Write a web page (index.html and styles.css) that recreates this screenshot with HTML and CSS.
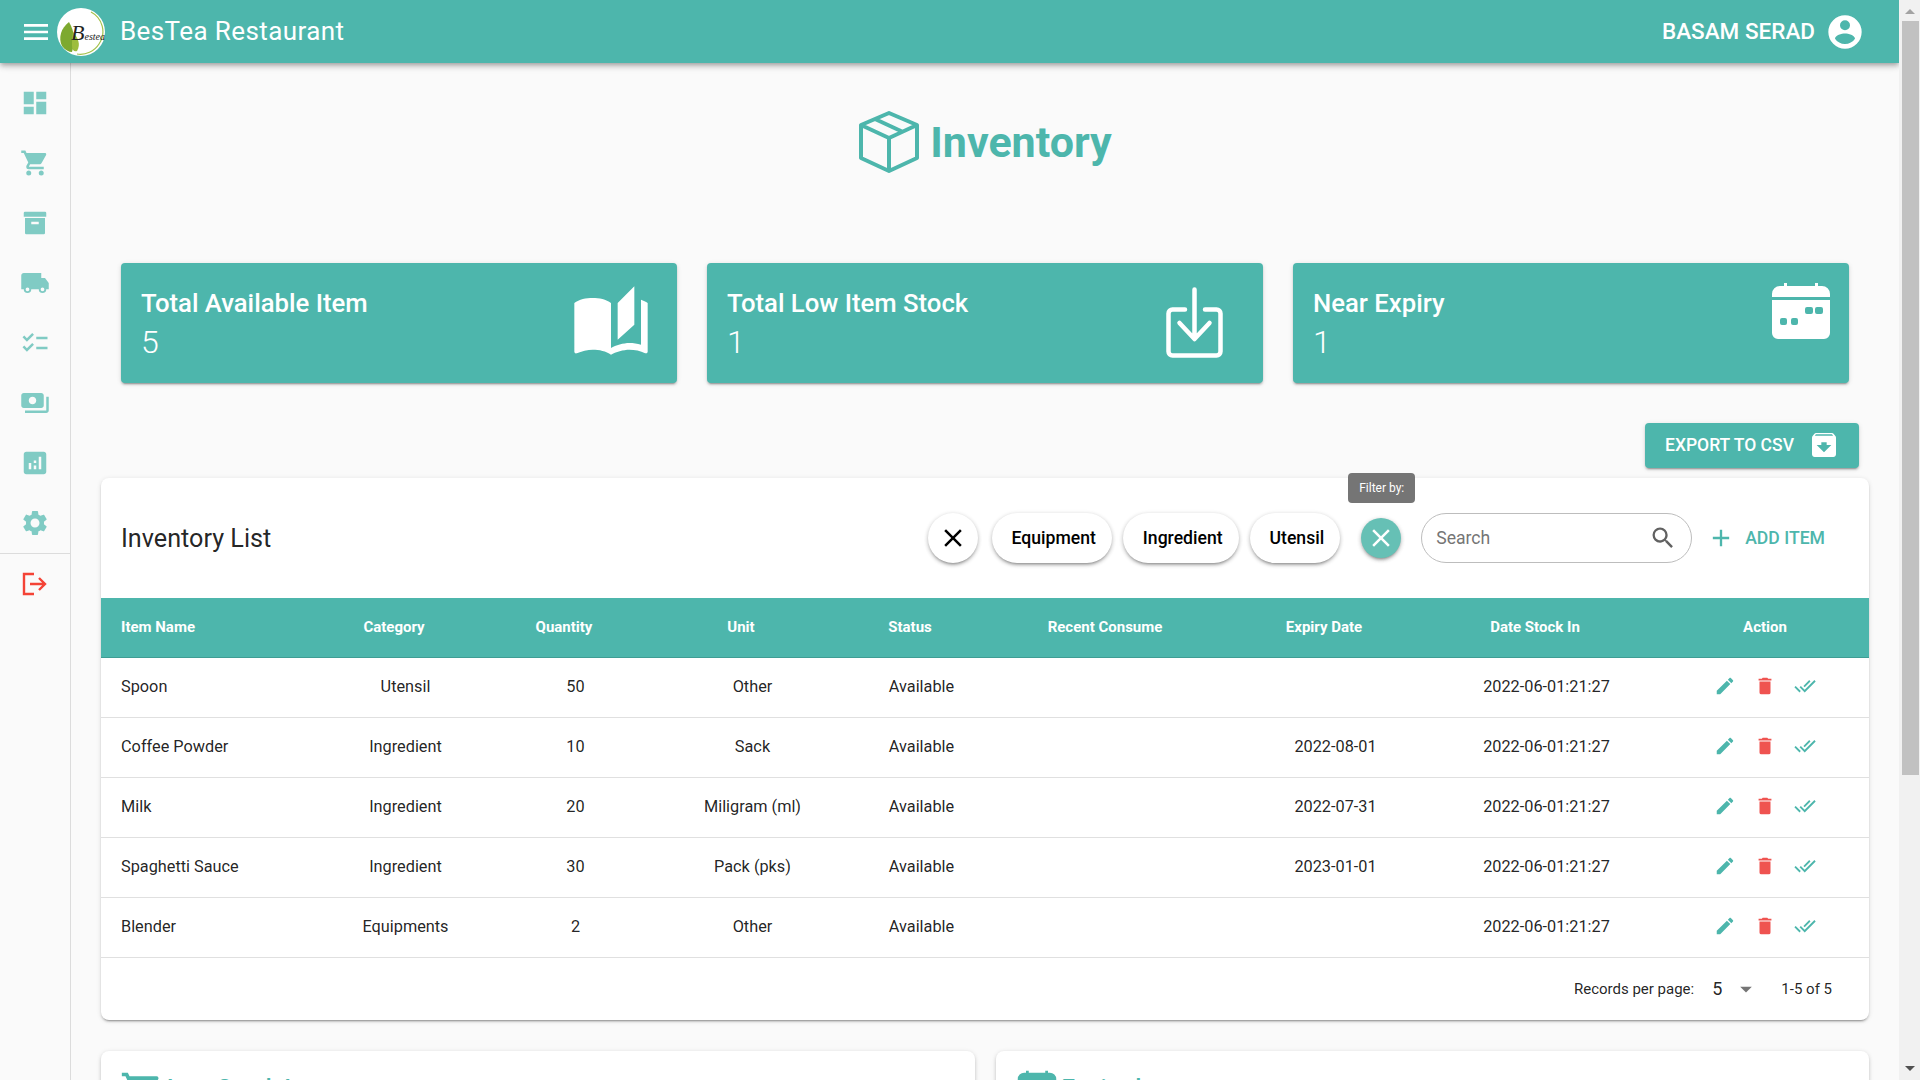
FILE: index.html
```html
<!DOCTYPE html>
<html lang="en">
<head>
  <meta charset="UTF-8">
  <meta name="viewport" content="width=device-width, initial-scale=1.0">
  <title>BesTea Restaurant - Inventory</title>
  <link rel="stylesheet" href="styles.css">
</head>
<body>
  <div class="window">
    <div class="app">
      <header class="topbar">
        <div class="brand">
          <svg class="menu-icon" viewBox="0 0 24 24"><path d="M3,6H21V8H3V6M3,11H21V13H3V11M3,16H21V18H3V16Z"/></svg>
          <svg class="logo" viewBox="0 0 48 48">
            <circle cx="24" cy="24" r="24" fill="#fff"/>
            <path d="M34 4a22 22 0 0 1 8 32 22 22 0 0 1-22 10" fill="none" stroke="#a4c14a" stroke-width="1.2"/>
            <path d="M12 14C4 20 1 30 5 38C8 42 12 44 15 44C18 34 18 24 12 14z" fill="#7da92f"/>
            <path d="M16 24C21 30 24 36 20 43C17 44 15 42 15 38C15 33 15 28 16 24z" fill="#9dbd3d"/>
            <text class="logo-text" x="14" y="32"><tspan class="logo-cap">B</tspan>estea</text>
          </svg>
          <span class="brand-name">BesTea Restaurant</span>
        </div>
        <div class="user">
          <span class="user-name">BASAM SERAD</span>
          <svg class="user-icon" viewBox="0 0 24 24"><path d="M12,19.2C9.5,19.2 7.29,17.92 6,16C6.03,14 10,12.9 12,12.9C14,12.9 17.97,14 18,16C16.71,17.92 14.5,19.2 12,19.2M12,5A3,3 0 0,1 15,8A3,3 0 0,1 12,11A3,3 0 0,1 9,8A3,3 0 0,1 12,5M12,2A10,10 0 0,0 2,12A10,10 0 0,0 12,22A10,10 0 0,0 22,12A10,10 0 0,0 12,2Z"/></svg>
        </div>
      </header>

      <div class="body-row">
        <nav class="sidebar">
          <div class="nav-item"><svg viewBox="0 0 24 24"><path d="M13,3V9H21V3M13,21H21V11H13M3,21H11V15H3M3,13H11V3H3V13Z"/></svg></div>
          <div class="nav-item"><svg viewBox="0 0 24 24"><path d="M17,18C15.89,18 15,18.89 15,20A2,2 0 0,0 17,22A2,2 0 0,0 19,20C19,18.89 18.1,18 17,18M1,2V4H3L6.6,11.59L5.24,14.04C5.09,14.32 5,14.65 5,15A2,2 0 0,0 7,17H19V15H7.42A0.25,0.25 0 0,1 7.17,14.75C7.17,14.7 7.18,14.66 7.2,14.63L8.1,13H15.55C16.3,13 16.96,12.58 17.3,11.97L20.88,5.5C20.95,5.34 21,5.17 21,5A1,1 0 0,0 20,4H5.21L4.27,2M7,18C5.89,18 5,18.89 5,20A2,2 0 0,0 7,22A2,2 0 0,0 9,20C9,18.89 8.1,18 7,18Z"/></svg></div>
          <div class="nav-item"><svg viewBox="0 0 24 24"><path d="M4,3H20A1,1 0 0,1 21,4V7H3V4A1,1 0 0,1 4,3M4,8H20V20A1,1 0 0,1 19,21H5A1,1 0 0,1 4,20V8M9,11V13H15V11H9Z"/></svg></div>
          <div class="nav-item"><svg viewBox="0 0 24 24"><path d="M20,8H17V4H3C1.89,4 1,4.89 1,6V17H3A3,3 0 0,0 6,20A3,3 0 0,0 9,17H15A3,3 0 0,0 18,20A3,3 0 0,0 21,17H23V12L20,8M6,18.5A1.5,1.5 0 0,1 4.5,17A1.5,1.5 0 0,1 6,15.5A1.5,1.5 0 0,1 7.5,17A1.5,1.5 0 0,1 6,18.5M18,18.5A1.5,1.5 0 0,1 16.5,17A1.5,1.5 0 0,1 18,15.5A1.5,1.5 0 0,1 19.5,17A1.5,1.5 0 0,1 18,18.5Z"/></svg></div>
          <div class="nav-item"><svg viewBox="0 0 24 24"><path d="M22,7h-9v2h9V7z M22,15h-9v2h9V15z M5.54,11L2,7.46l1.41-1.41l2.12,2.12l4.24-4.24l1.41,1.41L5.54,11z M5.54,19L2,15.46l1.41-1.41l2.12,2.12l4.24-4.24l1.41,1.41L5.54,19z"/></svg></div>
          <div class="nav-item"><svg viewBox="0 0 24 24"><path d="M19,14V6c0-1.1-0.9-2-2-2H3C1.9,4,1,4.9,1,6v8c0,1.1,0.9,2,2,2h14C18.1,16,19,15.1,19,14z M10,13c-1.66,0-3-1.34-3-3s1.34-3,3-3s3,1.34,3,3S11.66,13,10,13z M23,7v11c0,1.1-0.9,2-2,2H4v-2h17V7H23z"/></svg></div>
          <div class="nav-item"><svg viewBox="0 0 24 24"><path d="M19,3H5C3.9,3,3,3.9,3,5v14c0,1.1,0.9,2,2,2h14c1.1,0,2-0.9,2-2V5C21,3.9,20.1,3,19,3z M9,17H7v-5h2V17z M13,17h-2v-3h2V17z M13,12h-2v-2h2V12z M17,17h-2V7h2V17z"/></svg></div>
          <div class="nav-item"><svg viewBox="0 0 24 24"><path d="M19.14,12.94c0.04-0.3,0.06-0.61,0.06-0.94c0-0.32-0.02-0.64-0.07-0.94l2.03-1.58c0.18-0.14,0.23-0.41,0.12-0.61 l-1.92-3.32c-0.12-0.22-0.37-0.29-0.59-0.22l-2.39,0.96c-0.5-0.38-1.03-0.7-1.62-0.94L14.4,2.81c-0.04-0.24-0.24-0.41-0.48-0.41 h-3.84c-0.24,0-0.43,0.17-0.47,0.41L9.25,5.35C8.66,5.59,8.12,5.92,7.63,6.29L5.24,5.33c-0.22-0.08-0.47,0-0.59,0.22L2.74,8.87 C2.62,9.08,2.66,9.34,2.86,9.48l2.03,1.58C4.84,11.36,4.8,11.69,4.8,12s0.02,0.64,0.07,0.94l-2.03,1.58 c-0.18,0.14-0.23,0.41-0.12,0.61l1.92,3.32c0.12,0.22,0.37,0.29,0.59,0.22l2.39-0.96c0.5,0.38,1.03,0.7,1.62,0.94l0.36,2.54 c0.05,0.24,0.24,0.41,0.48,0.41h3.84c0.24,0,0.44-0.17,0.47-0.41l0.36-2.54c0.59-0.24,1.13-0.56,1.62-0.94l2.39,0.96 c0.22,0.08,0.47,0,0.59-0.22l1.92-3.32c0.12-0.22,0.07-0.47-0.12-0.61L19.14,12.94z M12,15.6c-1.98,0-3.6-1.62-3.6-3.6 s1.62-3.6,3.6-3.6s3.6,1.62,3.6,3.6S13.98,15.6,12,15.6z"/></svg></div>
          <div class="nav-item nav-logout">
            <svg viewBox="0 0 26 24"><path d="M12 2H2v20h10M8 12h15M17 6l6 6-6 6"/></svg>
          </div>
        </nav>

        <main class="content">
          <h1 class="page-title">
            <svg class="cube" viewBox="0 0 62 62"><path d="M31 2L59 14V47L31 60L3 47V14L31 2ZM3 14L31 27L59 14M31 27V60M17 8L45 21"/></svg>
            <span>Inventory</span>
          </h1>

          <section class="stats">
            <div class="stat-card">
              <div class="stat-text">
                <div class="stat-title">Total Available Item</div>
                <div class="stat-value">5</div>
              </div>
              <svg class="stat-icon" viewBox="0 0 24 24"><path d="M19 1L14 6V17L19 12.5V1M21 5V18.5C19.9 18.15 18.7 18 17.5 18C15.8 18 13.35 18.65 12 19.5V6C10.55 4.9 8.45 4.5 6.5 4.5C4.55 4.5 2.45 4.9 1 6V20.65C1 20.9 1.25 21.15 1.5 21.15C1.6 21.15 1.65 21.1 1.75 21.1C3.1 20.45 5.05 20 6.5 20C8.45 20 10.55 20.4 12 21.5C13.35 20.65 15.8 20 17.5 20C19.15 20 20.85 20.3 22.25 21.05C22.35 21.1 22.4 21.1 22.5 21.1C22.75 21.1 23 20.85 23 20.6V6C22.4 5.55 21.75 5.25 21 5Z"/></svg>
            </div>
            <div class="stat-card">
              <div class="stat-text">
                <div class="stat-title">Total Low Item Stock</div>
                <div class="stat-value">1</div>
              </div>
              <svg class="stat-icon stat-icon-line" viewBox="0 0 80 80"><path d="M28 26.5H15.5A4 4 0 0 0 11.5 30.5V68.5A4 4 0 0 0 15.5 72.5H59.5A4 4 0 0 0 63.5 68.5V30.5A4 4 0 0 0 59.5 26.5H48M37.5 6.5V55M22.5 40L37.5 56L52.5 40"/></svg>
            </div>
            <div class="stat-card">
              <div class="stat-text">
                <div class="stat-title">Near Expiry</div>
                <div class="stat-value">1</div>
              </div>
              <svg class="stat-icon stat-icon-cal" viewBox="0 0 80 80"><path d="M24 0H27V3H55V0H58V3H62A8 8 0 0 1 70 11V14H12V11A8 8 0 0 1 20 3H24ZM12 17H70V50A6 6 0 0 1 64 56H18A6 6 0 0 1 12 50ZM47 24A2 2 0 0 0 45 26V29A2 2 0 0 0 47 31H51A2 2 0 0 0 53 29V26A2 2 0 0 0 51 24ZM57 24A2 2 0 0 0 55 26V29A2 2 0 0 0 57 31H61A2 2 0 0 0 63 29V26A2 2 0 0 0 61 24ZM22 35A2 2 0 0 0 20 37V40A2 2 0 0 0 22 42H25A2 2 0 0 0 27 40V37A2 2 0 0 0 25 35ZM33 35A2 2 0 0 0 31 37V40A2 2 0 0 0 33 42H36A2 2 0 0 0 38 40V37A2 2 0 0 0 36 35Z" fill-rule="evenodd"/></svg>
            </div>
          </section>

          <div class="export-row">
            <button class="export-btn">
              <span>EXPORT TO CSV</span>
              <svg viewBox="0 0 24 24"><path d="M20.54 5.23L19.15 3.55C18.88 3.21 18.47 3 18 3H6C5.53 3 5.12 3.21 4.84 3.55L3.46 5.23C3.17 5.57 3 6 3 6.5V19C3 20.1 3.9 21 5 21H19C20.1 21 21 20.1 21 19V6.5C21 6 20.83 5.57 20.54 5.23M12 17.5L6.5 12H10V10H14V12H17.5L12 17.5M5.12 5L5.93 4H17.93L18.87 5H5.12Z"/></svg>
            </button>
          </div>

          <section class="list-card">
            <div class="list-head">
              <h2 class="list-title">Inventory List</h2>
              <div class="list-tools">
                <button class="chip chip-round"><svg viewBox="0 0 24 24"><path d="M19,6.41L17.59,5L12,10.59L6.41,5L5,6.41L10.59,12L5,17.59L6.41,19L12,13.41L17.59,19L19,17.59L13.41,12L19,6.41Z"/></svg></button>
                <button class="chip">Equipment</button>
                <button class="chip">Ingredient</button>
                <button class="chip">Utensil</button>
                <div class="filter-wrap">
                  <div class="tooltip">Filter by:</div>
                  <button class="filter-btn"><svg viewBox="0 0 24 24"><path d="M19,6.41L17.59,5L12,10.59L6.41,5L5,6.41L10.59,12L5,17.59L6.41,19L12,13.41L17.59,19L19,17.59L13.41,12L19,6.41Z"/></svg></button>
                </div>
                <div class="search">
                  <span>Search</span>
                  <svg viewBox="0 0 24 24"><path d="M9.5,3A6.5,6.5 0 0,1 16,9.5C16,11.11 15.41,12.59 14.44,13.73L14.71,14H15.5L20.5,19L19,20.5L14,15.5V14.71L13.73,14.44C12.59,15.41 11.11,16 9.5,16A6.5,6.5 0 0,1 3,9.5A6.5,6.5 0 0,1 9.5,3M9.5,5C7,5 5,7 5,9.5C5,12 7,14 9.5,14C12,14 14,12 14,9.5C14,7 12,5 9.5,5Z"/></svg>
                </div>
                <button class="add-btn">
                  <svg viewBox="0 0 24 24"><path d="M19,13H13V19H11V13H5V11H11V5H13V11H19V13Z"/></svg>
                  <span>ADD ITEM</span>
                </button>
              </div>
            </div>

            <table class="items">
              <thead>
                <tr>
                  <th>Item Name</th><th>Category</th><th>Quantity</th><th>Unit</th><th>Status</th><th>Recent Consume</th><th>Expiry Date</th><th>Date Stock In</th><th>Action</th>
                </tr>
              </thead>
              <tbody id="rows"></tbody>
            </table>

            <div class="table-foot">
              <span>Records per page:</span>
              <span class="per-page">5</span>
              <svg class="caret" viewBox="0 0 24 24"><path d="M7,10L12,15L17,10H7Z"/></svg>
              <span class="range">1-5 of 5</span>
            </div>
          </section>

          <section class="lower">
            <div class="lower-card">
              <svg viewBox="0 0 24 24"><path d="M17,18C15.89,18 15,18.89 15,20A2,2 0 0,0 17,22A2,2 0 0,0 19,20C19,18.89 18.1,18 17,18M1,2V4H3L6.6,11.59L5.24,14.04C5.09,14.32 5,14.65 5,15A2,2 0 0,0 7,17H19V15H7.42A0.25,0.25 0 0,1 7.17,14.75C7.17,14.7 7.18,14.66 7.2,14.63L8.1,13H15.55C16.3,13 16.96,12.58 17.3,11.97L20.88,5.5C20.95,5.34 21,5.17 21,5A1,1 0 0,0 20,4H5.21L4.27,2M7,18C5.89,18 5,18.89 5,20A2,2 0 0,0 7,22A2,2 0 0,0 9,20C9,18.89 8.1,18 7,18Z"/></svg>
              <span>Low Stock Items</span>
            </div>
            <div class="lower-card">
              <svg viewBox="0 0 24 24"><path d="M6 1H7.5V2H16.5V1H18V2H19A3.5 3.5 0 0 1 22.5 5.5V8H1.5V5.5A3.5 3.5 0 0 1 5 2H6V1ZM1.5 9H22.5V19A2 2 0 0 1 20.5 21H3.5A2 2 0 0 1 1.5 19V9Z"/></svg>
              <span>Expired</span>
            </div>
          </section>
        </main>
      </div>
    </div>

    <div class="scrollbar">
      <div class="arrow-up"></div>
      <div class="thumb"></div>
      <div class="arrow-down"></div>
    </div>
  </div>

  <script>
    // table rows
    const items = [
      ["Spoon", "Utensil", 50, "Other", "Available", "", "", "2022-06-01:21:27"],
      ["Coffee Powder", "Ingredient", 10, "Sack", "Available", "", "2022-08-01", "2022-06-01:21:27"],
      ["Milk", "Ingredient", 20, "Miligram (ml)", "Available", "", "2022-07-31", "2022-06-01:21:27"],
      ["Spaghetti Sauce", "Ingredient", 30, "Pack (pks)", "Available", "", "2023-01-01", "2022-06-01:21:27"],
      ["Blender", "Equipments", 2, "Other", "Available", "", "", "2022-06-01:21:27"]
    ];

    const actions = `
      <div class="actions">
        <svg class="act-edit" viewBox="0 0 24 24"><path d="M20.71,7.04C21.1,6.65 21.1,6 20.71,5.63L18.37,3.29C18,2.9 17.35,2.9 16.96,3.29L15.12,5.12L18.87,8.87M3,17.25V21H6.75L17.81,9.93L14.06,6.18L3,17.25Z"/></svg>
        <svg class="act-delete" viewBox="0 0 24 24"><path d="M19,4H15.5L14.5,3H9.5L8.5,4H5V6H19M6,19A2,2 0 0,0 8,21H16A2,2 0 0,0 18,19V7H6V19Z"/></svg>
        <svg class="act-check" viewBox="0 0 24 24"><path d="M0.41,13.41L6,19L7.41,17.58L1.83,12M22.24,5.58L11.66,16.17L7.5,12L6.07,13.41L11.66,19L23.66,7M18,7L16.59,5.58L10.24,11.93L11.66,13.34L18,7Z"/></svg>
      </div>`;

    document.getElementById("rows").innerHTML = items.map(row =>
      "<tr>" + row.map(v => "<td>" + v + "</td>").join("") + "<td>" + actions + "</td></tr>"
    ).join("");
  </script>
</body>
</html>
```

FILE: styles.css
```css
:root {
  --teal: #4db6ac;
  --teal-light: #80cbc4;
  --page-bg: #fafafa;
  --red: #f44336;
}
* {
  box-sizing: border-box;
}
html, body {
  margin: 0;
  height: 100%;
  overflow: hidden;
}
body {
  font-family: Roboto, "Liberation Sans", sans-serif;
  color: rgba(0,0,0,0.87);
  background: var(--page-bg);
}
button {
  font-family: inherit;
  border: none;
  cursor: pointer;
}
.window {
  display: flex;
  height: 1080px;
}
.app {
  width: 1899px;
  height: 1080px;
  overflow: hidden;
  display: flex;
  flex-direction: column;
}

/* scrollbar */
.scrollbar {
  width: 21px;
  background: #f1f1f1;
  display: flex;
  flex-direction: column;
  align-items: center;
  padding: 9px 0 9px 1px;
}
.thumb {
  width: 17px;
  height: 754px;
  margin-top: 7px;
  background: #c1c1c1;
}
.arrow-up, .arrow-down {
  width: 0;
  height: 0;
  border-left: 5px solid transparent;
  border-right: 5px solid transparent;
}
.arrow-up {
  border-bottom: 5px solid #a3a3a3;
}
.arrow-down {
  border-top: 5px solid #505050;
  margin-top: auto;
}

/* top bar */
.topbar {
  height: 63px;
  flex: none;
  background: var(--teal);
  color: #fff;
  display: flex;
  align-items: center;
  justify-content: space-between;
  padding: 0 34px 0 20px;
  box-shadow: 0 2px 4px -1px rgba(0,0,0,.2), 0 4px 5px 0 rgba(0,0,0,.14), 0 1px 10px 0 rgba(0,0,0,.12);
  position: relative;
  z-index: 2;
}
.brand {
  display: flex;
  align-items: center;
}
.menu-icon {
  width: 32px;
  height: 32px;
  fill: #fff;
}
.logo {
  width: 48px;
  height: 48px;
  margin-left: 5px;
}
.logo-text {
  font-family: "Liberation Serif", serif;
  font-style: italic;
  font-size: 10px;
  fill: #222;
}
.logo-cap {
  font-size: 22px;
}
.brand-name {
  font-size: 26px;
  letter-spacing: 0.4px;
  margin: 0 0 2px 15px;
}
.user {
  display: flex;
  align-items: center;
  gap: 10px;
  font-size: 22.5px;
  font-weight: 500;
}
.user-name {
  margin-bottom: 2px;
}
.user-icon {
  width: 40px;
  height: 40px;
  fill: #fff;
}

.body-row {
  flex: 1;
  display: flex;
  min-height: 0;
}

/* sidebar */
.sidebar {
  width: 71px;
  flex: none;
  border-right: 1px solid #dcdcdc;
  padding-top: 10px;
}
.nav-item {
  height: 60px;
  display: flex;
  align-items: center;
  justify-content: center;
}
.nav-item svg {
  width: 30px;
  height: 30px;
  fill: var(--teal-light);
}
.nav-logout {
  border-top: 1px solid #dcdcdc;
}
.nav-logout svg {
  width: 26px;
  height: 24px;
  fill: none;
  stroke: var(--red);
  stroke-width: 2.4;
}

/* main column */
.content {
  flex: 1;
  padding: 0 30px;
  min-width: 0;
}
.page-title {
  height: 127px;
  margin: 0;
  padding-top: 30px;
  display: flex;
  justify-content: center;
  align-items: center;
  gap: 10px;
  color: var(--teal);
  font-size: 43px;
  font-weight: 700;
}
.cube {
  width: 62px;
  height: 62px;
  fill: none;
  stroke: var(--teal);
  stroke-width: 4;
  stroke-linejoin: round;
}

.stats {
  display: grid;
  grid-template-columns: repeat(3, 1fr);
  gap: 30px;
  margin: 73px 20px 0;
}
.stat-card {
  height: 120px;
  background: var(--teal);
  color: #fff;
  border-radius: 4px;
  padding: 0 26px 0 20px;
  display: flex;
  justify-content: space-between;
  align-items: center;
  box-shadow: 0 3px 1px -2px rgba(0,0,0,.2), 0 2px 2px 0 rgba(0,0,0,.14), 0 1px 5px 0 rgba(0,0,0,.12);
}
.stat-text {
  padding-top: 2px;
}
.stat-title {
  font-size: 25.7px;
  font-weight: 500;
  line-height: 36px;
}
.stat-value {
  font-size: 32px;
  font-weight: 300;
  line-height: 42px;
}
.stat-icon {
  width: 80px;
  height: 80px;
  fill: #fff;
}
.stat-icon-line {
  fill: none;
  stroke: #fff;
  stroke-width: 4.5;
  stroke-linecap: round;
  stroke-linejoin: round;
}
.stat-icon-cal {
  margin-right: -17px;
}

.export-row {
  display: flex;
  justify-content: flex-end;
  margin-top: 40px;
  padding-right: 10px;
}
.export-btn {
  width: 214px;
  height: 45px;
  background: var(--teal);
  color: #fff;
  border-radius: 4px;
  font-size: 17.5px;
  font-weight: 500;
  display: flex;
  align-items: center;
  justify-content: space-between;
  padding: 0 19px 2px 20px;
  box-shadow: 0 3px 1px -2px rgba(0,0,0,.2), 0 2px 2px 0 rgba(0,0,0,.14), 0 1px 5px 0 rgba(0,0,0,.12);
}
.export-btn svg {
  width: 32px;
  height: 32px;
  fill: #fff;
}

/* inventory card */
.list-card {
  margin-top: 10px;
  background: #fff;
  border-radius: 8px;
  box-shadow: 0 3px 1px -2px rgba(0,0,0,.2), 0 2px 2px 0 rgba(0,0,0,.14), 0 1px 5px 0 rgba(0,0,0,.12);
}
.list-head {
  height: 120px;
  display: flex;
  align-items: center;
  justify-content: space-between;
  padding: 0 44px 0 20px;
}
.list-title {
  margin: 0;
  font-size: 25.2px;
  font-weight: 400;
}
.list-tools {
  display: flex;
  align-items: center;
}
.chip {
  height: 50px;
  padding: 0 16px 0 20px;
  margin-left: 11px;
  border-radius: 25px;
  background: #fff;
  color: #000;
  font-size: 17.6px;
  font-weight: 500;
  box-shadow: 0 3px 3px -2px rgba(0,0,0,.3), 0 2px 4px 0 rgba(0,0,0,.18), 0 1px 5px 0 rgba(0,0,0,.12);
}
.chip-round {
  width: 50px;
  padding: 0;
  margin-left: 0;
  margin-right: 3px;
  display: flex;
  align-items: center;
  justify-content: center;
}
.chip-round svg {
  width: 30px;
  height: 30px;
  fill: #000;
}
.filter-wrap {
  position: relative;
  margin-left: 21px;
}
.filter-btn {
  display: flex;
  align-items: center;
  justify-content: center;
  width: 40px;
  height: 40px;
  padding: 0;
  border-radius: 50%;
  background: #66c0b5;
  box-shadow: 0 3px 3px -2px rgba(0,0,0,.3), 0 2px 4px 0 rgba(0,0,0,.18), 0 1px 5px 0 rgba(0,0,0,.12);
}
.filter-btn svg {
  width: 30px;
  height: 30px;
  fill: #fff;
}
.tooltip {
  position: absolute;
  top: -45px;
  left: -13px;
  width: 67px;
  height: 30px;
  background: #757575;
  color: #fff;
  border-radius: 4px;
  font-size: 12px;
  display: flex;
  align-items: center;
  justify-content: center;
}
.search {
  width: 271px;
  height: 50px;
  margin-left: 20px;
  border: 1px solid #bdbdbd;
  border-radius: 25px;
  display: flex;
  align-items: center;
  justify-content: space-between;
  padding: 0 14px;
  color: #757575;
  font-size: 17.6px;
}
.search svg {
  width: 28px;
  height: 28px;
  fill: #616161;
}
.add-btn {
  margin-left: 15px;
  background: none;
  color: var(--teal);
  font-size: 17.6px;
  font-weight: 500;
  display: flex;
  align-items: center;
  gap: 10px;
  padding: 0;
}
.add-btn svg {
  width: 28px;
  height: 28px;
  fill: var(--teal);
}

/* table */
.items {
  width: 100%;
  border-collapse: collapse;
  table-layout: fixed;
}
.items th {
  height: 59px;
  background: var(--teal);
  border-bottom: 1px solid #3f9d94;
  color: #fff;
  font-size: 15px;
  font-weight: 700;
  padding: 0 22px 1px 0;
}
.items td {
  height: 60px;
  padding: 0 0 1px 1px;
  text-align: center;
  font-size: 16.3px;
  border-bottom: 1px solid #e0e0e0;
}
.items th:nth-child(1), .items td:nth-child(1) {
  width: 214px;
  padding-left: 20px;
  text-align: left;
}
.items th:nth-child(2) { width: 180px; }
.items th:nth-child(3) { width: 160px; }
.items th:nth-child(4) { width: 194px; }
.items th:nth-child(5) { width: 144px; }
.items th:nth-child(6) { width: 246px; }
.items th:nth-child(7) { width: 192px; }
.items th:nth-child(8) { width: 230px; }
.items th:nth-child(9) { width: 208px; padding-right: 0; }
.actions {
  display: flex;
  justify-content: center;
  align-items: center;
  gap: 18px;
  margin: -1px 0 0 -1px;
}
.actions svg {
  width: 22px;
  height: 22px;
}
.act-edit { fill: var(--teal); }
.act-delete { fill: #ef5350; }
.act-check { fill: var(--teal); }

.table-foot {
  height: 62px;
  display: flex;
  align-items: center;
  justify-content: flex-end;
  padding-right: 37px;
  font-size: 15px;
}
.per-page {
  font-size: 18px;
  margin-left: 18px;
}
.caret {
  width: 28px;
  height: 28px;
  margin-left: 10px;
  fill: #757575;
}
.range {
  margin-left: 21px;
}

/* bottom cards, cut off by the window */
.lower {
  display: grid;
  grid-template-columns: 1fr 1fr;
  gap: 21px;
  margin-top: 31px;
}
.lower-card {
  height: 300px;
  background: #fff;
  border-radius: 8px;
  padding: 18px 19px;
  display: flex;
  align-items: flex-start;
  gap: 3px;
  color: var(--teal);
  font-size: 24px;
  font-weight: 500;
  box-shadow: 0 2px 4px -1px rgba(0,0,0,.2), 0 1px 5px 0 rgba(0,0,0,.12);
}
.lower-card span {
  margin-top: 5px;
}
.lower-card svg {
  width: 44px;
  height: 44px;
  flex: none;
  fill: var(--teal);
}
```
